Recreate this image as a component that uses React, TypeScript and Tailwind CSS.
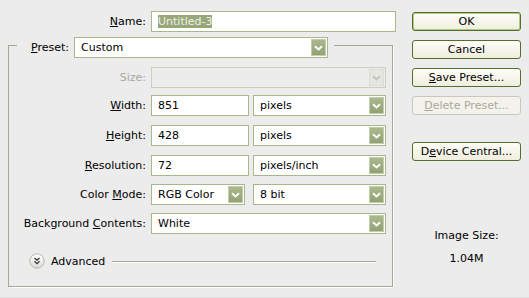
import clsx from "clsx";

function Arrow({ disabled }: { disabled?: boolean }) {
  return (
    <span
      className={clsx(
        "flex h-[17px] w-[15px] shrink-0 items-center justify-center border",
        disabled
          ? "border-[#dcdcd4] bg-[#e6e6e1]"
          : "border-[#c2ccae] bg-gradient-to-b from-[#aab88c] to-[#93a273]",
      )}
    >
      <svg width="9" height="6" viewBox="0 0 9 6">
        <path
          d="M1 1.2 L4.5 4.5 L8 1.2"
          fill="none"
          stroke={disabled ? "#c4c4bc" : "#ffffff"}
          strokeWidth="2"
        />
      </svg>
    </span>
  );
}

function Select({
  value,
  className,
  disabled,
}: {
  value?: string;
  className?: string;
  disabled?: boolean;
}) {
  return (
    <div
      className={clsx(
        "flex h-[21px] shrink-0 items-center border p-px",
        disabled ? "border-[#cdcdc0] bg-[#ececec]" : "border-[#a6b88c] bg-white",
        className,
      )}
    >
      <span className="flex-1 pl-[5px]">{value}</span>
      <Arrow disabled={disabled} />
    </div>
  );
}

function Field({ value, className }: { value: string; className?: string }) {
  return (
    <div
      className={clsx(
        "flex h-[21px] shrink-0 items-center border border-[#a6b88c] bg-white pl-[6px]",
        className,
      )}
    >
      {value}
    </div>
  );
}

function Row({
  label,
  disabled,
  className,
  children,
}: {
  label: React.ReactNode;
  disabled?: boolean;
  className?: string;
  children: React.ReactNode;
}) {
  return (
    <div className={clsx("flex h-[21px] items-center", className)}>
      <span
        className={clsx(
          "w-[142px] shrink-0 pr-[5px] text-right",
          disabled && "text-[#a9a9a0]",
        )}
      >
        {label}
      </span>
      {children}
    </div>
  );
}

function Button({
  children,
  primary,
  disabled,
  className,
}: {
  children: React.ReactNode;
  primary?: boolean;
  disabled?: boolean;
  className?: string;
}) {
  return (
    <div
      className={clsx(
        "flex h-[19px] items-center justify-center rounded-[3px] border",
        disabled
          ? "border-[#cac8bb] bg-[#f3f2ec] text-[#aca899]"
          : "border-[#52702a] bg-gradient-to-b from-[#fefefa] to-[#efeddd]",
        primary && "shadow-[inset_0_0_0_1px_#b0c985]",
        className,
      )}
    >
      {children}
    </div>
  );
}

export default function App() {
  return (
    <div className="flex h-[298px] w-[529px] border-b border-[#dedede] bg-[#ececec] font-['DejaVu_Sans',sans-serif] text-[11px] leading-[13px] text-black">
      {/* left: form */}
      <div className="w-[412px] shrink-0 pl-2 pt-[11px]">
        <div className="flex h-[21px] items-center">
          <span className="w-[143px] shrink-0 pr-[5px] text-right">
            <u>N</u>ame:
          </span>
          <div className="flex h-[21px] w-[245px] items-center border border-[#a6b88c] bg-white pl-[6px]">
            <span className="bg-[#98a77a] text-[#eef0e6]">Untitled-3</span>
          </div>
        </div>

        <fieldset className="mt-[1px] w-[385px] border border-[#a7a798] pb-[17px] shadow-[1px_1px_0_#ffffff]">
          <legend className="ml-2 flex items-center pr-[6px] pt-[4px]">
            <span className="w-[57px] pr-[5px] text-right">
              <u>P</u>reset:
            </span>
            <Select value="Custom" className="w-[254px]" />
          </legend>

          <Row label="Size:" disabled className="mt-[9px]">
            <Select disabled className="w-[235px]" />
          </Row>
          <Row
            label={
              <>
                <u>W</u>idth:
              </>
            }
            className="mt-[7px]"
          >
            <Field value="851" className="w-[98px]" />
            <Select value="pixels" className="ml-[4px] w-[133px]" />
          </Row>
          <Row
            label={
              <>
                <u>H</u>eight:
              </>
            }
            className="mt-[9px]"
          >
            <Field value="428" className="w-[98px]" />
            <Select value="pixels" className="ml-[4px] w-[133px]" />
          </Row>
          <Row
            label={
              <>
                <u>R</u>esolution:
              </>
            }
            className="mt-[9px]"
          >
            <Field value="72" className="w-[98px]" />
            <Select value="pixels/inch" className="ml-[4px] w-[133px]" />
          </Row>
          <Row
            label={
              <>
                Color <u>M</u>ode:
              </>
            }
            className="mt-[8px]"
          >
            <Select value="RGB Color" className="w-[94px]" />
            <Select value="8 bit" className="ml-[8px] w-[133px]" />
          </Row>
          <Row
            label={
              <>
                Background <u>C</u>ontents:
              </>
            }
            className="mt-[8px]"
          >
            <Select value="White" className="w-[235px]" />
          </Row>

          <div className="mt-[19px] flex h-[16px] items-center pl-[20px] pr-[16px]">
            <svg width="16" height="16" viewBox="0 0 16 16" className="shrink-0">
              <defs>
                <linearGradient id="adv" x1="0" y1="0" x2="0" y2="1">
                  <stop offset="0" stopColor="#ffffff" />
                  <stop offset="1" stopColor="#dcdcd6" />
                </linearGradient>
              </defs>
              <circle cx="8" cy="8" r="7.2" fill="url(#adv)" stroke="#b8b8b0" />
              <path d="M5.5 5 L8 7.3 L10.5 5 M5.5 8.3 L8 10.6 L10.5 8.3" fill="none" stroke="#333" strokeWidth="1.2" />
            </svg>
            <span className="ml-[6px]">Advanced</span>
            <div className="ml-[7px] h-px flex-1 bg-[#a7a798] shadow-[0_1px_0_#ffffff]" />
          </div>
        </fieldset>
      </div>

      {/* right: buttons */}
      <div className="flex w-[109px] shrink-0 flex-col pt-[12px]">
        <Button primary>OK</Button>
        <Button className="mt-[9px]">Cancel</Button>
        <Button className="mt-[9px]">
          <span>
            <u>S</u>ave Preset...
          </span>
        </Button>
        <Button disabled className="mt-[9px]">
          <span>
            <u>D</u>elete Preset...
          </span>
        </Button>
        <Button className="mt-[27px]">
          <span>
            D<u>e</u>vice Central...
          </span>
        </Button>
        <div className="mt-[68px] text-center">Image Size:</div>
        <div className="mt-[10px] text-center">1.04M</div>
      </div>
    </div>
  );
}
